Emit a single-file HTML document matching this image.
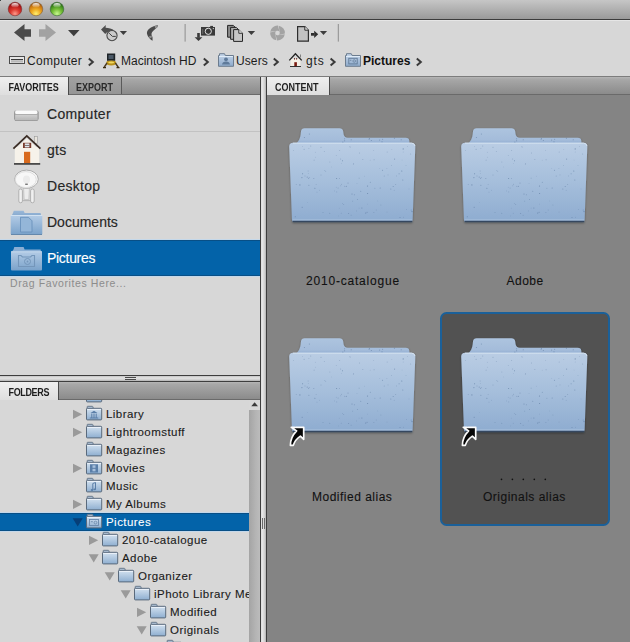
<!DOCTYPE html>
<html><head><meta charset="utf-8">
<style>
html,body{margin:0;padding:0;}
body{width:630px;height:642px;overflow:hidden;position:relative;background:#d7d7d7;font-family:"Liberation Sans",sans-serif;}
.a{position:absolute;}
.t{position:absolute;white-space:nowrap;line-height:1;}
#title{left:0;top:0;width:630px;height:19px;background:linear-gradient(#c6c6c6,#9a9a9a);}
#tline{left:0;top:19px;width:630px;height:1px;background:#3c3c3c;}
#thl{left:0;top:20px;width:630px;height:1px;background:#e6e6e6;}
.light{position:absolute;top:2px;width:14px;height:14px;border-radius:50%;}
.hline{position:absolute;height:1px;}
.vline{position:absolute;width:1px;}
.tabbar{position:absolute;height:17px;background:linear-gradient(#b6b6b6 0,#a8a8a8 2px,#8b8b8b 100%);}
.tab{position:absolute;height:18px;background:linear-gradient(#efefef,#dedede);}
.tabtxt{position:absolute;font-weight:bold;font-size:9px;letter-spacing:0px;transform:scaleY(1.13);transform-origin:0 0;color:#1e1e1e;line-height:1;white-space:nowrap;}
.fav{position:absolute;left:47px;font-size:14px;letter-spacing:0.3px;color:#262626;-webkit-text-stroke:0.15px currentColor;line-height:1;white-space:nowrap;}
.tree{position:absolute;font-size:11.5px;letter-spacing:0.45px;color:#161616;-webkit-text-stroke:0.1px currentColor;line-height:1;white-space:nowrap;}
.lbl{position:absolute;font-size:12px;color:#111;-webkit-text-stroke:0.1px currentColor;line-height:1;white-space:nowrap;}
</style></head><body>

<!-- title bar -->
<div class="a" style="left:0;top:0;width:1px;height:1px;background:#3a4442;z-index:5"></div>
<div id="title" class="a"></div>
<div id="tline" class="a"></div>
<div id="thl" class="a"></div>
<svg class="a" style="left:0;top:0" width="70" height="19" viewBox="0 0 70 19">
 <defs>
  <radialGradient id="lr" cx="0.5" cy="0.85" r="0.75"><stop offset="0" stop-color="#ff9a8a"/><stop offset="0.45" stop-color="#dc3a30"/><stop offset="0.85" stop-color="#b01818"/><stop offset="1" stop-color="#901010"/></radialGradient>
  <radialGradient id="ly" cx="0.5" cy="0.85" r="0.75"><stop offset="0" stop-color="#fff070"/><stop offset="0.45" stop-color="#eeaa22"/><stop offset="0.85" stop-color="#c87410"/><stop offset="1" stop-color="#a05a10"/></radialGradient>
  <radialGradient id="lg" cx="0.5" cy="0.85" r="0.75"><stop offset="0" stop-color="#c8f890"/><stop offset="0.45" stop-color="#78c03a"/><stop offset="0.85" stop-color="#3e8a1c"/><stop offset="1" stop-color="#2e6a18"/></radialGradient>
  <linearGradient id="lh" x1="0" y1="0" x2="0" y2="1"><stop offset="0" stop-color="#fff" stop-opacity="0.95"/><stop offset="1" stop-color="#fff" stop-opacity="0"/></linearGradient>
 </defs>
 <circle cx="15" cy="9" r="6.8" fill="url(#lr)" stroke="#7a3030" stroke-width="0.6"/>
 <ellipse cx="15" cy="5.3" rx="3.6" ry="2.4" fill="url(#lh)"/>
 <circle cx="36" cy="9" r="6.8" fill="url(#ly)" stroke="#80603a" stroke-width="0.6"/>
 <ellipse cx="36" cy="5.3" rx="3.6" ry="2.4" fill="url(#lh)"/>
 <circle cx="57" cy="9" r="6.8" fill="url(#lg)" stroke="#3a6a3a" stroke-width="0.6"/>
 <ellipse cx="57" cy="5.3" rx="3.6" ry="2.4" fill="url(#lh)"/>
</svg>

<!-- toolbar -->
<svg class="a" style="left:0;top:0" width="630" height="48" viewBox="0 0 630 48">
 <g fill="#4b4b4b">
  <path d="M14,32.5 L24.5,24 L24.5,29.3 L31,29.3 L31,36.7 L24.5,36.7 L24.5,41 Z"/>
 </g>
 <path fill="#a2a2a2" d="M56,32.5 L45.5,24 L45.5,29.3 L39,29.3 L39,36.7 L45.5,36.7 L45.5,41 Z"/>
 <path fill="#3e3e3e" d="M68,30 L79.5,30 L73.75,36.3 Z"/>
 <!-- recent -->
 <path fill="#4e4e4e" d="M101,29.6 L105.8,25 L105.6,27.8 C108.5,28 112,28.5 114.5,30.8 L111.5,31.5 C109,31 107,32 105.5,33.8 L105.2,34 Z"/>
 <circle cx="112" cy="35.6" r="5.1" fill="#cbcbcb" stroke="#4a4a4a" stroke-width="1.1"/>
 <path d="M109.2,33.2 L112.4,36.4 L115.8,36.4" fill="none" stroke="#404040" stroke-width="1"/>
 <path fill="#3e3e3e" d="M119.8,30.9 L127,30.9 L123.4,35.1 Z"/>
 <!-- boomerang -->
 <path fill="#4a4a4a" d="M158,25.3 C153,26 148,28.5 147,32 C146.5,35 149,38.5 152.6,40.8 L152.5,37 C151.5,35.5 151,33.5 152.2,32 C153.5,30.5 156,28.5 157.3,27.2 Z"/>
 <path fill="#a8a8a8" d="M154.5,26.2 L156.4,25.8 L157.6,27 L155.5,28.6 Z" opacity="0.8"/>
 <path fill="#a0a0a0" d="M148.8,36.4 L151.6,35.6 L152,37.2 L150,38.4 Z" opacity="0.8"/>
 <!-- separator -->
 <rect x="184.6" y="24" width="1" height="17.6" fill="#8e8e8e"/>
 <!-- camera -->
 <rect x="201" y="27" width="14" height="8.6" fill="#3a3a3a"/>
 <rect x="210.2" y="25.9" width="2.8" height="1.4" fill="#3a3a3a"/>
 <circle cx="208.3" cy="31.3" r="3.1" fill="#3a3a3a" stroke="#f4f4f4" stroke-width="0.9"/>
 <circle cx="213.3" cy="28.6" r="0.6" fill="#eee"/>
 <rect x="202.4" y="29" width="0.8" height="5" fill="#777"/>
 <rect x="197.2" y="33" width="2.6" height="4.6" fill="#3a3a3a"/>
 <path fill="#3a3a3a" d="M194.6,37.3 L202.4,37.3 L198.5,41 Z"/>
 <!-- docs -->
 <path d="M227.6,25.4 L233.3,25.4 L235.3,27.4 L235.3,37.2 L227.6,37.2 Z" fill="#8c8c8c" stroke="#262626" stroke-width="1"/>
 <path d="M230.6,27.4 L236.3,27.4 L238.6,29.7 L238.6,39.3 L230.6,39.3 Z" fill="#acacac" stroke="#262626" stroke-width="1"/>
 <path d="M233.6,29.6 L238.8,29.6 L242.5,33.3 L242.5,41.4 L233.6,41.4 Z" fill="#c6c6c6" stroke="#262626" stroke-width="1"/>
 <path d="M238.8,29.6 L238.8,33.3 L242.5,33.3" fill="#e0e0e0" stroke="#262626" stroke-width="0.9"/>
 <path fill="#3e3e3e" d="M247.7,31 L255.1,31 L251.4,35.1 Z"/>
 <!-- rotate -->
 <g fill="#a3a3a3">
  <path d="M270.19,31.84 A7.4,7.4 0 0 1 277.89,25.61 L279.75,32.52 A2.3,2.3 0 0 0 277.26,30.71 Z"/>
  <path d="M278.66,25.69 A7.4,7.4 0 0 1 284.89,33.39 L277.98,35.25 A2.3,2.3 0 0 0 279.79,32.76 Z"/>
  <path d="M284.81,34.16 A7.4,7.4 0 0 1 277.11,40.39 L275.25,33.48 A2.3,2.3 0 0 0 277.74,35.29 Z"/>
  <path d="M276.34,40.31 A7.4,7.4 0 0 1 270.11,32.61 L277.02,30.75 A2.3,2.3 0 0 0 275.21,33.24 Z"/>
 </g>
 <!-- doc arrow -->
 <path d="M297.6,26.6 L304.8,26.6 L308.4,30.2 L308.4,41.2 L297.6,41.2 Z" fill="#c2c2c2" stroke="#2e2e2e" stroke-width="1.2"/>
 <path d="M304.8,26.6 L304.8,30.2 L308.4,30.2" fill="#e4e4e4" stroke="#2e2e2e" stroke-width="1"/>
 <rect x="311" y="33" width="3.4" height="2.7" fill="#2e2e2e"/>
 <path fill="#2e2e2e" d="M314.2,30.7 L318.2,34.3 L314.2,38 Z"/>
 <path fill="#3e3e3e" d="M319.9,31 L327.1,31 L323.5,35 Z"/>
 <rect x="337.8" y="24" width="1" height="17.6" fill="#8e8e8e"/>
</svg>


<!-- breadcrumb -->
<svg class="a" style="left:0;top:48px" width="440" height="28" viewBox="0 48 440 28">
 <defs>
  <linearGradient id="bfold" x1="0" y1="0" x2="0" y2="1"><stop offset="0" stop-color="#c6d6ea"/><stop offset="1" stop-color="#8eaacb"/></linearGradient>
 </defs>
 <!-- computer icon -->
 <rect x="9.5" y="56.5" width="15" height="7" fill="#e6e6e6" stroke="#4a4a4a" stroke-width="1"/>
 <rect x="11" y="59" width="12" height="1.2" fill="#3a3a3a"/>
 <rect x="11" y="61" width="12" height="1.5" fill="#b8b8b8"/>
 <path d="M88.8,58.6 L92.8,62 L88.8,65.4" fill="none" stroke="#3a3a3a" stroke-width="2"/>
 <!-- HD lander -->
 <rect x="107" y="53.5" width="8.2" height="7.3" fill="#1e2428"/>
 <rect x="108.5" y="55" width="5" height="4" fill="#4a5866"/>
 <ellipse cx="111.2" cy="63" rx="5" ry="2.4" fill="#b8901a"/>
 <ellipse cx="111.2" cy="62.5" rx="3" ry="1.1" fill="#f0d860"/>
 <path d="M107,63 L104,67.5 M115.4,63 L118.4,67.5" stroke="#4a3a20" stroke-width="1.4"/>
 <path d="M103,67.6 L106,67.6 M116.5,67.6 L119.5,67.6" stroke="#3a2a10" stroke-width="1.2"/>
 <path d="M203.8,58.6 L207.8,62 L203.8,65.4" fill="none" stroke="#3a3a3a" stroke-width="2"/>
 <!-- users folder -->
 <path d="M219.5,55.5 L219.5,53.7 L224.5,53.7 L225.3,55.5 L233.5,55.5 L233.5,66.3 L218.5,66.3 L218.5,55.5 Z" fill="url(#bfold)" stroke="#6c7c8e" stroke-width="1"/>
 <rect x="219" y="56" width="14" height="1" fill="#e0ecf8"/>
 <circle cx="226" cy="59.3" r="1.9" fill="#5e7a9a"/>
 <path d="M222,64.6 Q222.5,61.5 226,61.5 Q229.5,61.5 230,64.6 Z" fill="#5e7a9a"/>
 <path d="M273.8,58.6 L277.8,62 L273.8,65.4" fill="none" stroke="#3a3a3a" stroke-width="2"/>
 <!-- house -->
 <rect x="290.6" y="59" width="9.8" height="7.4" fill="#f4f0e6"/>
 <path d="M289.3,60.4 L295.4,53.8 L301.7,60.4" fill="none" stroke="#222" stroke-width="1.3"/>
 <rect x="300" y="54.5" width="0.9" height="3" fill="#777"/>
 <rect x="294.3" y="62.2" width="2.6" height="4.2" fill="#7a1a10"/>
 <rect x="294" y="58" width="0.9" height="1.6" fill="#6a2a20"/>
 <rect x="296.2" y="58" width="0.9" height="1.6" fill="#6a2a20"/>
 <rect x="290" y="66" width="11" height="0.9" fill="#222"/>
 <path d="M330.6,58.6 L334.6,62 L330.6,65.4" fill="none" stroke="#3a3a3a" stroke-width="2"/>
 <!-- pictures folder -->
 <path d="M346.5,55.5 L346.5,53.7 L351.3,53.7 L352.1,55.5 L360.5,55.5 L360.5,66.3 L345.5,66.3 L345.5,55.5 Z" fill="url(#bfold)" stroke="#6c7c8e" stroke-width="1"/>
 <rect x="346" y="56" width="14" height="1" fill="#e0ecf8"/>
 <rect x="348.8" y="58.3" width="8.4" height="5.6" fill="none" stroke="#607a96" stroke-width="0.9"/>
 <rect x="349.8" y="59.8" width="1.6" height="0.8" fill="#607a96"/>
 <circle cx="354.2" cy="61" r="1.3" fill="none" stroke="#607a96" stroke-width="0.7"/>
 <path d="M416.8,58.6 L420.8,62 L416.8,65.4" fill="none" stroke="#3a3a3a" stroke-width="2"/>
</svg>
<div class="t" style="left:27px;top:55px;font-size:12px;letter-spacing:0.3px;color:#1c1c1c;">Computer</div>
<div class="t" style="left:121px;top:55px;font-size:12px;letter-spacing:0px;color:#1c1c1c;">Macintosh HD</div>
<div class="t" style="left:236px;top:55px;font-size:12px;letter-spacing:0.1px;color:#1c1c1c;">Users</div>
<div class="t" style="left:306px;top:55px;font-size:12px;letter-spacing:0.9px;color:#1c1c1c;">gts</div>
<div class="t" style="left:363px;top:55px;font-size:12px;font-weight:bold;letter-spacing:0px;color:#111;">Pictures</div>


<!-- panel frame -->
<div class="hline" style="left:0;top:76px;width:630px;background:#7c7c7c;"></div>
<!-- left favorites tab bar -->
<div class="tabbar" style="left:0;top:77px;width:260px;"></div>
<div class="hline" style="left:0;top:94px;width:260px;background:#6a6a6a;"></div>
<div class="tab" style="left:0;top:77px;width:68px;"></div>
<div class="vline" style="left:68px;top:77px;height:18px;background:#4a4a4a;"></div>
<div class="a" style="left:69px;top:77px;width:52px;height:17px;background:linear-gradient(#a2a2a2,#959595);"></div>
<div class="vline" style="left:121px;top:77px;height:17px;background:#5a5a5a;"></div>
<div class="tabtxt" style="left:8.5px;top:82.5px;">FAVORITES</div>
<div class="tabtxt" style="left:76px;top:82.5px;color:#2a2a2a;">EXPORT</div>
<!-- vertical splitter -->
<div class="vline" style="left:260px;top:77px;height:565px;background:#3e3e3e;"></div>
<div class="a" style="left:261px;top:77px;width:5px;height:565px;background:linear-gradient(90deg,#dedede,#e6e6e6 30%,#d2d2d2 70%,#b2b2b2);"></div>
<div class="vline" style="left:266px;top:77px;height:565px;background:#3e3e3e;"></div>
<!-- content tab bar -->
<div class="tabbar" style="left:267px;top:77px;width:363px;"></div>
<div class="hline" style="left:267px;top:94px;width:363px;background:#6a6a6a;"></div>
<div class="tab" style="left:267px;top:77px;width:62px;"></div>
<div class="vline" style="left:329px;top:77px;height:18px;background:#4a4a4a;"></div>
<div class="tabtxt" style="left:275px;top:82.5px;">CONTENT</div>
<div class="a" style="left:267px;top:95px;width:363px;height:547px;background:#848484;"></div>
<!-- favorites separator -->
<div class="hline" style="left:0;top:131px;width:260px;background:#c2c2c2;"></div>
<!-- horizontal splitter -->
<div class="hline" style="left:0;top:375px;width:260px;background:#3e3e3e;"></div>
<div class="a" style="left:0;top:376px;width:260px;height:5px;background:linear-gradient(#c4c4c4,#e4e4e4 40%,#d2d2d2 70%,#b0b0b0);"></div>
<div class="hline" style="left:0;top:381px;width:260px;background:#3e3e3e;"></div>
<div class="hline" style="left:125px;top:377px;width:11px;background:#4a4a4a;"></div>
<div class="hline" style="left:125px;top:379px;width:11px;background:#4a4a4a;"></div>
<!-- folders tab bar -->
<div class="tabbar" style="left:0;top:382px;width:260px;"></div>
<div class="hline" style="left:0;top:399px;width:260px;background:#6a6a6a;"></div>
<div class="tab" style="left:0;top:382px;width:58px;"></div>
<div class="vline" style="left:58px;top:382px;height:18px;background:#4a4a4a;"></div>
<div class="tabtxt" style="left:8.5px;top:387.5px;letter-spacing:-0.35px;">FOLDERS</div>


<!-- favorites list -->
<div class="a" style="left:0;top:239px;width:260px;height:1px;background:#c4d8ea;"></div>
<div class="a" style="left:0;top:240px;width:260px;height:36px;background:#0363a9;box-shadow:inset 0 1px 0 #084f86, inset 0 -1px 0 #084f86;"></div>
<div class="a" style="left:0;top:276px;width:260px;height:1px;background:#c4d8ea;"></div>
<svg class="a" style="left:0;top:96px" width="260" height="180" viewBox="0 96 260 180">
 <defs>
  <linearGradient id="minih" x1="0" y1="0" x2="1" y2="0"><stop offset="0" stop-color="#8a8a8a"/><stop offset="0.08" stop-color="#c8c8c8"/><stop offset="0.92" stop-color="#c8c8c8"/><stop offset="1" stop-color="#8a8a8a"/></linearGradient>
  <linearGradient id="miniv" x1="0" y1="0" x2="0" y2="1"><stop offset="0" stop-color="#d4d4d4"/><stop offset="1" stop-color="#b6b6b6"/></linearGradient>
  <linearGradient id="mini" x1="0" y1="0" x2="0" y2="1"><stop offset="0" stop-color="#ffffff"/><stop offset="0.22" stop-color="#f4f4f4"/><stop offset="0.36" stop-color="#cfcfcf"/><stop offset="0.7" stop-color="#b2b2b2"/><stop offset="0.88" stop-color="#8c8c8c"/><stop offset="1" stop-color="#9a9a9a"/></linearGradient>
  <linearGradient id="ffold" x1="0" y1="0" x2="0" y2="1"><stop offset="0" stop-color="#b4cce6"/><stop offset="1" stop-color="#7aa2ca"/></linearGradient>
  <linearGradient id="ffoldb" x1="0" y1="0" x2="0" y2="1"><stop offset="0" stop-color="#9ab8d8"/><stop offset="1" stop-color="#8aacd0"/></linearGradient>
  <radialGradient id="saucer" cx="0.5" cy="0.4" r="0.6"><stop offset="0" stop-color="#fafafa"/><stop offset="0.7" stop-color="#e0e0e0"/><stop offset="1" stop-color="#a8a8a8"/></radialGradient>
 </defs>
 <!-- mac mini -->
 <rect x="14" y="110.3" width="24.6" height="10.4" rx="2.3" fill="url(#minih)"/>
 <rect x="15.4" y="114.3" width="21.8" height="5.6" fill="url(#miniv)" opacity="0.9"/>
 <rect x="15.2" y="110.6" width="22.2" height="3.4" rx="1.6" fill="#fafafa"/>
 <rect x="15" y="114" width="22.6" height="0.7" fill="#a0a0a0"/>
 <rect x="15" y="120" width="22.6" height="0.7" fill="#8a8a8a"/>
 
 <!-- house -->
 <rect x="14.8" y="147" width="24.4" height="16.5" fill="#f6f2ea"/>
 <rect x="34.4" y="136.4" width="3" height="7" fill="#e8e4dc" stroke="#9a9a9a" stroke-width="0.6"/>
 <path d="M13.4,148.6 L26.8,135.9 L40.4,148.6" fill="none" stroke="#3a2c24" stroke-width="1.8"/>
 <path d="M16,148.5 L26.8,138.2 L37.8,148.5 Z" fill="#f6f2ea"/>
 <rect x="23" y="142.8" width="8.2" height="5.2" fill="#7a3a2a"/>
 <rect x="24.8" y="143.4" width="4.6" height="4" fill="#dfe6ee"/>
 <rect x="24.8" y="145.1" width="4.6" height="0.7" fill="#5a4a40"/>
 <rect x="24" y="151.8" width="6.2" height="11.4" fill="#d86a1e"/>
 <rect x="14" y="163" width="26.2" height="1.8" fill="#4a4a4a"/>
 <!-- enterprise -->
 <rect x="18.8" y="189" width="3.6" height="13.8" rx="1.8" fill="#f0f0f0" stroke="#a4a4a4" stroke-width="0.8"/>
 <rect x="30.6" y="189" width="3.6" height="13.8" rx="1.8" fill="#f0f0f0" stroke="#a4a4a4" stroke-width="0.8"/>
 <path d="M23.6,188 L29.4,188 L28.8,199.5 L24.2,199.5 Z" fill="#ececec" stroke="#b8b8b8" stroke-width="0.6"/>
 <path d="M22.2,200.6 L30.8,200.6" stroke="#b0b0b0" stroke-width="0.9"/>
 <ellipse cx="26.5" cy="179.2" rx="11.8" ry="9.1" fill="#f7f7f7" stroke="#a6a6a6" stroke-width="0.9"/>
 <ellipse cx="25.8" cy="179.6" rx="10.5" ry="8" fill="none" stroke="#dedede" stroke-width="1"/>
 <ellipse cx="26.5" cy="179.5" rx="3.5" ry="4" fill="#ebebeb"/>
 <rect x="25.2" y="183.6" width="2.6" height="1.3" fill="#6a6a6a"/>
 <!-- documents folder -->
 <path d="M13,213 L13.8,210.8 L23.6,210.8 L24.6,213 L40.6,213 L41,215 L12,215 Z" fill="url(#ffoldb)"/>
 <rect x="10.7" y="215" width="31.6" height="19.7" rx="1" fill="url(#ffold)"/>
 <rect x="10.7" y="215" width="31.6" height="1" fill="#d8e6f4" opacity="0.8"/>
 <rect x="11" y="234" width="31" height="1" fill="#6488ac"/>
 <path d="M20.5,217.3 L28.5,217.3 L32,220.8 L32,232 L20.5,232 Z" fill="#94b6d8" stroke="#6a92bc" stroke-width="0.9"/>
 <!-- pictures folder (selected) -->
 <path d="M13.5,249.5 L14.3,247 L23.6,247 L24.6,249.5 L40.6,249.5 L41,251.4 L12,251.4 Z" fill="#8aaed4"/>
 <rect x="11" y="251.3" width="31" height="19.3" rx="1" fill="url(#ffold)"/>
 <rect x="11" y="251.3" width="31" height="1" fill="#d0e0f0" opacity="0.8"/>
 <path d="M18.5,255.5 L21,255.5 L22.5,257 L30.5,257 L32,255.5 L34.5,255.5 L34.5,266.5 L18.5,266.5 Z" fill="none" stroke="#7496ba" stroke-width="1.1"/>
 <circle cx="27.5" cy="261.5" r="3" fill="none" stroke="#7496ba" stroke-width="1"/>
 <circle cx="27.5" cy="261.5" r="0.9" fill="#7496ba"/>
</svg>
<div class="fav" style="top:107px;">Computer</div>
<div class="fav" style="top:143px;">gts</div>
<div class="fav" style="top:179px;">Desktop</div>
<div class="fav" style="top:215px;letter-spacing:0px;">Documents</div>
<div class="fav" style="top:251px;color:#fff;letter-spacing:-0.3px;">Pictures</div>
<div class="t" style="left:10px;top:278px;font-size:10.5px;letter-spacing:0.6px;color:#8c8c8c;">Drag Favorites Here...</div>


<!-- folders tree -->
<div class="a" style="left:0;top:400px;width:249px;height:242px;overflow:hidden;">
 <div class="a" style="left:0;top:112px;width:249px;height:1px;background:#c4d8ea;"></div>
 <div class="a" style="left:0;top:113px;width:249px;height:18px;background:#0363a9;box-shadow:inset 0 1px 0 #084f86, inset 0 -1px 0 #084f86;"></div>
 <div class="a" style="left:0;top:131px;width:249px;height:1px;background:#c4d8ea;"></div>
 <svg class="a" style="left:0;top:-400px" width="249" height="642" viewBox="0 0 249 642">
  <defs>
   <linearGradient id="tfg" x1="0" y1="0" x2="0" y2="1"><stop offset="0" stop-color="#d4e2f0"/><stop offset="1" stop-color="#8eaed0"/></linearGradient>
   <g id="tf">
    <path d="M1.2,3.5 L1.2,1.8 Q1.2,1.3 1.7,1.3 L6.2,1.3 Q6.7,1.3 6.9,1.8 L7.3,3.5 Z" fill="#b8cce2" stroke="#5e6e80" stroke-width="0.9"/>
    <rect x="0.5" y="3.3" width="15.2" height="11.6" rx="0.8" fill="url(#tfg)" stroke="#5a6a7c" stroke-width="1"/>
    <rect x="1.2" y="4.1" width="13.8" height="0.9" fill="#eef4fa" opacity="0.9"/>
   </g>
  </defs>
  <use href="#tf" x="86" y="387"/>
  <path d="M73,409.7 L82.2,414.3 L73,419 Z" fill="#9a9a9a"/>
  <use href="#tf" x="86" y="405"/>
  <path d="M90.5,413 L94,410.8 L97.5,413 Z M91.3,413.5 h1 v4 h-1 Z M93.5,413.5 h1 v4 h-1 Z M95.7,413.5 h1 v4 h-1 Z M89.8,417.5 h8.4 v1 h-8.4 Z" fill="#5a7ea8"/>
  <path d="M73,427.7 L82.2,432.3 L73,437 Z" fill="#9a9a9a"/>
  <use href="#tf" x="86" y="423"/>
  <use href="#tf" x="86" y="441"/>
  <path d="M73,463.7 L82.2,468.3 L73,473 Z" fill="#9a9a9a"/>
  <use href="#tf" x="86" y="459"/>
  <rect x="90" y="464.3" width="8" height="8.2" fill="#5a7ea8"/><rect x="92.5" y="465.3" width="3" height="2.5" fill="#a8c0dc"/><rect x="92.5" y="468.8" width="3" height="2.5" fill="#a8c0dc"/>
  <use href="#tf" x="86" y="477"/>
  <path d="M95.5,482.5 L95.5,489.3 M92.8,490 L92.8,483.5 L95.5,482.5" stroke="#5a7ea8" stroke-width="1" fill="none"/><ellipse cx="92" cy="490" rx="1.3" ry="0.9" fill="#5a7ea8"/><ellipse cx="94.7" cy="489.3" rx="1.3" ry="0.9" fill="#5a7ea8"/>
  <path d="M73,499.7 L82.2,504.3 L73,509 Z" fill="#9a9a9a"/>
  <use href="#tf" x="86" y="495"/>
  <path d="M72.7,518.2 L82.7,518.2 L77.7,526.5 Z" fill="#063f78"/>
  <use href="#tf" x="86" y="513"/>
  <rect x="89.5" y="519.5" width="9" height="6" fill="none" stroke="#6a88aa" stroke-width="0.9"/><rect x="90.8" y="521.3" width="2" height="0.9" fill="#6a88aa"/><circle cx="95.5" cy="522.6" r="1.4" fill="none" stroke="#6a88aa" stroke-width="0.8"/>
  <path d="M89,535.7 L98.2,540.3 L89,545 Z" fill="#9a9a9a"/>
  <use href="#tf" x="102" y="531"/>
  <path d="M88.7,554.2 L98.7,554.2 L93.7,562.5 Z" fill="#9a9a9a"/>
  <use href="#tf" x="102" y="549"/>
  <path d="M104.7,572.2 L114.7,572.2 L109.7,580.5 Z" fill="#9a9a9a"/>
  <use href="#tf" x="118" y="567"/>
  <path d="M120.7,590.2 L130.7,590.2 L125.7,598.5 Z" fill="#9a9a9a"/>
  <use href="#tf" x="134" y="585"/>
  <path d="M137,607.7 L146.2,612.3 L137,617 Z" fill="#9a9a9a"/>
  <use href="#tf" x="150" y="603"/>
  <path d="M136.7,626.2 L146.7,626.2 L141.7,634.5 Z" fill="#9a9a9a"/>
  <use href="#tf" x="150" y="621"/>
  <use href="#tf" x="166" y="639"/>
 </svg>
 <div class="a" style="left:0;top:-400px;width:249px;height:642px;">
 <div class="tree" style="left:106px;top:409.2px;color:#1a1a1a;">Library</div>
 <div class="tree" style="left:106px;top:427.2px;color:#1a1a1a;">Lightroomstuff</div>
 <div class="tree" style="left:106px;top:445.2px;color:#1a1a1a;">Magazines</div>
 <div class="tree" style="left:106px;top:463.2px;color:#1a1a1a;">Movies</div>
 <div class="tree" style="left:106px;top:481.2px;color:#1a1a1a;">Music</div>
 <div class="tree" style="left:106px;top:499.2px;color:#1a1a1a;">My Albums</div>
 <div class="tree" style="left:106px;top:517.2px;color:#fff;">Pictures</div>
 <div class="tree" style="left:122px;top:535.2px;color:#1a1a1a;">2010-catalogue</div>
 <div class="tree" style="left:122px;top:553.2px;color:#1a1a1a;">Adobe</div>
 <div class="tree" style="left:138px;top:571.2px;color:#1a1a1a;">Organizer</div>
 <div class="tree" style="left:154px;top:589.2px;color:#1a1a1a;">iPhoto Library Media</div>
 <div class="tree" style="left:170px;top:607.2px;color:#1a1a1a;">Modified</div>
 <div class="tree" style="left:170px;top:625.2px;color:#1a1a1a;">Originals</div>
 </div>
</div>
<!-- scrollbar -->
<div class="a" style="left:249px;top:400px;width:11px;height:242px;background:#d8d8d8;"></div>
<svg class="a" style="left:249px;top:400px" width="11" height="12" viewBox="249 400 11 12"><path d="M251.3,406.3 L254.6,402.3 L258,406.3 Z" fill="#3a3a3a"/></svg>
<div class="a" style="left:249px;top:410px;width:11px;height:232px;background:linear-gradient(90deg,#a4a4a4,#b4b4b4 60%,#bcbcbc);"></div>
<div class="vline" style="left:262px;top:518px;height:11px;background:#6a6a6a;"></div>
<div class="vline" style="left:264px;top:518px;height:11px;background:#6a6a6a;"></div>


<!-- content items -->
<div class="a" style="left:439.5px;top:312px;width:166.5px;height:210px;border:2px solid #1b6099;border-radius:6.5px;background:#525252;"></div>
<svg class="a" style="left:267px;top:95px" width="363" height="547" viewBox="267 95 363 547">
 <defs>
  <linearGradient id="bgf" x1="0" y1="0" x2="0" y2="1"><stop offset="0" stop-color="#bacde4"/><stop offset="0.5" stop-color="#a5bedb"/><stop offset="1" stop-color="#8eacd0"/></linearGradient>
  <linearGradient id="bgt" x1="0" y1="0" x2="0" y2="1"><stop offset="0" stop-color="#adc4df"/><stop offset="0.75" stop-color="#a4bcda"/><stop offset="1" stop-color="#8eaad0"/></linearGradient>
  <filter id="fsh" x="-10%" y="-10%" width="120%" height="120%"><feGaussianBlur in="SourceAlpha" stdDeviation="1.2"/><feOffset dy="0.5"/><feComponentTransfer><feFuncA type="linear" slope="0.35"/></feComponentTransfer><feMerge><feMergeNode/><feMergeNode in="SourceGraphic"/></feMerge></filter>
  <g id="bigf" filter="url(#fsh)">
   <path d="M6.8,17 C9.5,14.5 11.4,11 11.7,7.2 L12,4.4 Q12.4,1.2 15.6,1.2 L50.4,1.2 Q53.7,1.2 54.2,4.5 L54.6,7.3 Q55.3,10.7 58.6,10.7 L116.5,10.7 Q120.2,10.7 120.3,14 L120.5,17 Z" fill="url(#bgt)"/>
   <path d="M4,15.8 L122.5,15.8 Q126,15.8 126.3,19.5 L123.6,93 Q123.5,95 121.5,95 L5,95 Q3,95 3,93 L0.2,19.5 Q0.4,15.8 4,15.8 Z" fill="url(#bgf)"/>
   <path d="M4,16.2 L122.5,16.2 Q125.6,16.2 126,19" fill="none" stroke="#d4e2f0" stroke-width="1"/>
   <path d="M3.6,93 L123.2,93" stroke="#c2d3e8" stroke-width="0.8" opacity="0.7"/><path d="M3.6,94.6 L123.2,94.6" stroke="#34465e" stroke-width="1.5"/>
   <circle cx="57.3" cy="59.4" r="0.55" fill="#46648c" opacity="0.41"/>
   <circle cx="105.6" cy="32.1" r="0.55" fill="#46648c" opacity="0.47"/>
   <circle cx="98.2" cy="25.0" r="0.5" fill="#46648c" opacity="0.30"/>
   <circle cx="67.6" cy="83.9" r="0.4" fill="#46648c" opacity="0.46"/>
   <circle cx="50.5" cy="51.5" r="0.45" fill="#46648c" opacity="0.47"/>
   <circle cx="102.8" cy="22.7" r="0.4" fill="#46648c" opacity="0.32"/>
   <circle cx="32.0" cy="20.2" r="0.55" fill="#46648c" opacity="0.36"/>
   <circle cx="73.9" cy="32.5" r="0.45" fill="#46648c" opacity="0.47"/>
   <circle cx="63.0" cy="67.0" r="0.55" fill="#46648c" opacity="0.48"/>
   <circle cx="51.8" cy="58.8" r="0.4" fill="#46648c" opacity="0.50"/>
   <circle cx="40.8" cy="35.0" r="0.5" fill="#46648c" opacity="0.26"/>
   <circle cx="70.6" cy="26.0" r="0.4" fill="#46648c" opacity="0.55"/>
   <circle cx="49.4" cy="88.9" r="0.4" fill="#46648c" opacity="0.32"/>
   <circle cx="114.2" cy="21.9" r="0.55" fill="#46648c" opacity="0.59"/>
   <circle cx="50.7" cy="23.4" r="0.45" fill="#46648c" opacity="0.52"/>
   <circle cx="35.4" cy="24.4" r="0.5" fill="#46648c" opacity="0.26"/>
   <circle cx="52.2" cy="86.3" r="0.45" fill="#46648c" opacity="0.34"/>
   <circle cx="15.1" cy="22.4" r="0.55" fill="#46648c" opacity="0.31"/>
   <circle cx="70.1" cy="51.1" r="0.45" fill="#46648c" opacity="0.59"/>
   <circle cx="95.3" cy="49.0" r="0.55" fill="#46648c" opacity="0.29"/>
   <circle cx="53.5" cy="33.8" r="0.5" fill="#46648c" opacity="0.55"/>
   <circle cx="120.0" cy="61.9" r="0.4" fill="#46648c" opacity="0.32"/>
   <circle cx="50.3" cy="81.2" r="0.4" fill="#46648c" opacity="0.26"/>
   <circle cx="20.6" cy="50.7" r="0.4" fill="#46648c" opacity="0.52"/>
   <circle cx="42.5" cy="39.9" r="0.4" fill="#46648c" opacity="0.28"/>
   <circle cx="28.0" cy="65.1" r="0.4" fill="#46648c" opacity="0.46"/>
   <circle cx="47.6" cy="51.5" r="0.55" fill="#46648c" opacity="0.54"/>
   <circle cx="19.3" cy="46.6" r="0.45" fill="#46648c" opacity="0.36"/>
   <circle cx="30.4" cy="63.2" r="0.45" fill="#46648c" opacity="0.31"/>
   <circle cx="78.5" cy="59.0" r="0.55" fill="#46648c" opacity="0.56"/>
   <circle cx="75.4" cy="49.2" r="0.4" fill="#46648c" opacity="0.29"/>
   <circle cx="64.5" cy="36.9" r="0.55" fill="#46648c" opacity="0.34"/>
   <circle cx="101.8" cy="62.1" r="0.5" fill="#46648c" opacity="0.43"/>
   <circle cx="114.5" cy="90.3" r="0.45" fill="#46648c" opacity="0.33"/>
   <circle cx="70.1" cy="81.1" r="0.4" fill="#46648c" opacity="0.35"/>
   <circle cx="113.1" cy="33.1" r="0.4" fill="#46648c" opacity="0.27"/>
   <circle cx="52.4" cy="36.4" r="0.4" fill="#46648c" opacity="0.31"/>
   <circle cx="47.3" cy="60.3" r="0.45" fill="#46648c" opacity="0.28"/>
   <circle cx="19.6" cy="51.3" r="0.5" fill="#46648c" opacity="0.48"/>
   <circle cx="85.9" cy="61.2" r="0.45" fill="#46648c" opacity="0.46"/>
   <circle cx="113.8" cy="53.1" r="0.5" fill="#46648c" opacity="0.50"/>
   <circle cx="118.5" cy="19.6" r="0.4" fill="#46648c" opacity="0.42"/>
   <circle cx="90.7" cy="41.6" r="0.4" fill="#46648c" opacity="0.28"/>
   <circle cx="68.5" cy="72.5" r="0.45" fill="#46648c" opacity="0.53"/>
   <circle cx="112.8" cy="44.0" r="0.55" fill="#46648c" opacity="0.57"/>
   <circle cx="107.5" cy="48.9" r="0.4" fill="#46648c" opacity="0.55"/>
   <circle cx="71.7" cy="64.2" r="0.55" fill="#46648c" opacity="0.38"/>
   <circle cx="4.5" cy="23.3" r="0.4" fill="#46648c" opacity="0.47"/>
   <circle cx="122.2" cy="83.1" r="0.5" fill="#46648c" opacity="0.39"/>
   <circle cx="91.2" cy="61.0" r="0.55" fill="#46648c" opacity="0.41"/>
   <circle cx="68.0" cy="56.4" r="0.4" fill="#46648c" opacity="0.36"/>
   <circle cx="13.5" cy="19.6" r="0.4" fill="#46648c" opacity="0.42"/>
   <circle cx="76.7" cy="86.1" r="0.5" fill="#46648c" opacity="0.56"/>
   <circle cx="47.2" cy="28.6" r="0.45" fill="#46648c" opacity="0.43"/>
   <circle cx="93.5" cy="43.3" r="0.55" fill="#46648c" opacity="0.42"/>
   <circle cx="32.0" cy="48.0" r="0.5" fill="#46648c" opacity="0.32"/>
   <circle cx="54.7" cy="77.6" r="0.45" fill="#46648c" opacity="0.56"/>
   <circle cx="49.1" cy="61.1" r="0.5" fill="#46648c" opacity="0.32"/>
   <circle cx="19.1" cy="44.0" r="0.4" fill="#46648c" opacity="0.50"/>
   <circle cx="117.0" cy="38.5" r="0.45" fill="#46648c" opacity="0.29"/>
   <circle cx="59.6" cy="86.5" r="0.55" fill="#46648c" opacity="0.38"/>
   <circle cx="65.4" cy="67.7" r="0.55" fill="#46648c" opacity="0.36"/>
   <circle cx="102.4" cy="38.6" r="0.4" fill="#46648c" opacity="0.49"/>
   <circle cx="36.7" cy="44.2" r="0.4" fill="#46648c" opacity="0.47"/>
   <circle cx="51.6" cy="32.1" r="0.5" fill="#46648c" opacity="0.33"/>
   <circle cx="19.9" cy="21.5" r="0.4" fill="#46648c" opacity="0.41"/>
   <circle cx="78.6" cy="66.5" r="0.5" fill="#46648c" opacity="0.59"/>
   <circle cx="85.1" cy="32.8" r="0.55" fill="#46648c" opacity="0.34"/>
   <circle cx="88.7" cy="73.9" r="0.4" fill="#46648c" opacity="0.31"/>
   <circle cx="35.7" cy="43.6" r="0.45" fill="#46648c" opacity="0.39"/>
   <circle cx="98.0" cy="85.1" r="0.4" fill="#46648c" opacity="0.39"/>
   <circle cx="110.1" cy="46.7" r="0.55" fill="#46648c" opacity="0.41"/>
   <circle cx="78.1" cy="85.3" r="0.55" fill="#46648c" opacity="0.44"/>
   <circle cx="81.3" cy="55.2" r="0.5" fill="#46648c" opacity="0.41"/>
   <circle cx="81.2" cy="33.2" r="0.4" fill="#46648c" opacity="0.32"/>
   <circle cx="111.0" cy="90.6" r="0.5" fill="#46648c" opacity="0.44"/>
   <circle cx="97.9" cy="41.7" r="0.4" fill="#46648c" opacity="0.37"/>
   <circle cx="12.9" cy="50.6" r="0.55" fill="#46648c" opacity="0.52"/>
   <circle cx="61.5" cy="20.1" r="0.4" fill="#46648c" opacity="0.40"/>
   <circle cx="7.2" cy="57.5" r="0.45" fill="#46648c" opacity="0.41"/>
   <circle cx="123.0" cy="84.6" r="0.55" fill="#46648c" opacity="0.58"/>
   <circle cx="62.1" cy="88.2" r="0.4" fill="#46648c" opacity="0.52"/>
   <circle cx="55.7" cy="59.3" r="0.45" fill="#46648c" opacity="0.43"/>
   <circle cx="104.2" cy="59.4" r="0.5" fill="#46648c" opacity="0.48"/>
   <circle cx="117.6" cy="82.4" r="0.45" fill="#46648c" opacity="0.36"/>
   <circle cx="19.9" cy="58.3" r="0.5" fill="#46648c" opacity="0.45"/>
   <circle cx="27.1" cy="57.7" r="0.4" fill="#46648c" opacity="0.46"/>
   <circle cx="6.3" cy="89.7" r="0.55" fill="#46648c" opacity="0.44"/>
   <circle cx="121.7" cy="27.0" r="0.4" fill="#46648c" opacity="0.49"/>
   <circle cx="10.9" cy="57.9" r="0.55" fill="#46648c" opacity="0.57"/>
   <circle cx="99.0" cy="47.9" r="0.45" fill="#46648c" opacity="0.42"/>
   <circle cx="18.2" cy="50.1" r="0.55" fill="#46648c" opacity="0.43"/>
   <circle cx="16.0" cy="49.0" r="0.4" fill="#46648c" opacity="0.57"/>
   <circle cx="18.5" cy="75.7" r="0.4" fill="#46648c" opacity="0.26"/>
   <circle cx="21.7" cy="18.9" r="0.5" fill="#46648c" opacity="0.36"/>
   <circle cx="45.6" cy="63.9" r="0.4" fill="#46648c" opacity="0.42"/>
   <circle cx="72.9" cy="81.0" r="0.5" fill="#46648c" opacity="0.50"/>
   <circle cx="87.2" cy="83.0" r="0.4" fill="#46648c" opacity="0.38"/>
   <circle cx="52.6" cy="57.2" r="0.45" fill="#46648c" opacity="0.44"/>
   <circle cx="106.7" cy="57.5" r="0.45" fill="#46648c" opacity="0.44"/>
   <circle cx="105.2" cy="63.3" r="0.45" fill="#46648c" opacity="0.33"/>
   <circle cx="91.9" cy="78.0" r="0.45" fill="#46648c" opacity="0.36"/>
   <circle cx="40.8" cy="86.3" r="0.45" fill="#46648c" opacity="0.52"/>
   <circle cx="26.3" cy="25.2" r="0.45" fill="#46648c" opacity="0.30"/>
   <circle cx="13.6" cy="46.7" r="0.55" fill="#46648c" opacity="0.54"/>
   <circle cx="53.6" cy="76.5" r="0.45" fill="#46648c" opacity="0.32"/>
   <circle cx="78.4" cy="77.1" r="0.4" fill="#46648c" opacity="0.32"/>
   <circle cx="84.9" cy="85.4" r="0.5" fill="#46648c" opacity="0.29"/>
   <circle cx="63.7" cy="74.1" r="0.45" fill="#46648c" opacity="0.53"/>
   <circle cx="60.8" cy="19.8" r="0.55" fill="#46648c" opacity="0.30"/>
   <circle cx="25.1" cy="33.1" r="0.45" fill="#46648c" opacity="0.60"/>
   <circle cx="114.2" cy="25.0" r="0.4" fill="#46648c" opacity="0.30"/>
   <circle cx="84.7" cy="23.7" r="0.4" fill="#46648c" opacity="0.36"/>
   <circle cx="59.0" cy="56.1" r="0.55" fill="#46648c" opacity="0.32"/>
   <circle cx="47.8" cy="64.9" r="0.4" fill="#46648c" opacity="0.55"/>
   <circle cx="24.8" cy="51.6" r="0.5" fill="#46648c" opacity="0.39"/>
   <circle cx="26.4" cy="30.2" r="0.4" fill="#46648c" opacity="0.36"/>
   <circle cx="13.2" cy="80.3" r="0.55" fill="#46648c" opacity="0.45"/>
   <circle cx="25.9" cy="61.3" r="0.5" fill="#46648c" opacity="0.53"/>
   <circle cx="34.0" cy="85.4" r="0.45" fill="#46648c" opacity="0.54"/>
   <circle cx="55.6" cy="13.8" r="0.5" fill="#46648c" opacity="0.5"/>
   <circle cx="105.4" cy="11.3" r="0.5" fill="#46648c" opacity="0.5"/>
   <circle cx="93.6" cy="12.2" r="0.5" fill="#46648c" opacity="0.5"/>
   <circle cx="55.6" cy="11.7" r="0.5" fill="#46648c" opacity="0.5"/>
   <circle cx="20.4" cy="7.1" r="0.5" fill="#46648c" opacity="0.5"/>
   <circle cx="62.2" cy="12.7" r="0.5" fill="#46648c" opacity="0.5"/>
   <circle cx="80.1" cy="12.3" r="0.5" fill="#46648c" opacity="0.5"/>
   <circle cx="112.2" cy="12.7" r="0.5" fill="#46648c" opacity="0.5"/>
   <circle cx="82.3" cy="13.4" r="0.5" fill="#46648c" opacity="0.5"/>
   <circle cx="53.9" cy="15.0" r="0.5" fill="#46648c" opacity="0.5"/>
   <circle cx="80.4" cy="11.4" r="0.5" fill="#46648c" opacity="0.5"/>
   <circle cx="93.0" cy="14.8" r="0.5" fill="#46648c" opacity="0.5"/>
   <circle cx="15.4" cy="10.4" r="0.5" fill="#46648c" opacity="0.5"/>
   <circle cx="90.6" cy="12.9" r="0.5" fill="#46648c" opacity="0.5"/>
  </g>
  <g id="alias">
   <path d="M3.3,2.8 L15.7,2.8 L15.7,14.8 L12.4,11.6 C9,13.8 6.5,17 5.3,20.8 L2.4,20.8 C2.4,15.5 4.6,10.5 8.6,6.4 Z" fill="#050505" stroke="#fafafa" stroke-width="1.7" stroke-linejoin="round"/>
  </g>
 </defs>
 <use href="#bigf" x="289" y="127"/>
 <use href="#bigf" x="461" y="127"/>
 <use href="#bigf" x="289" y="337"/>
 <use href="#bigf" x="461" y="337"/>
 <use href="#alias" x="288" y="424.5"/>
 <use href="#alias" x="460" y="424.5"/>
 <g fill="#111"><circle cx="501.5" cy="479.3" r="0.85"/><circle cx="512.4" cy="479.3" r="0.85"/><circle cx="523.3" cy="479.3" r="0.85"/><circle cx="534.3" cy="479.3" r="0.85"/><circle cx="545.3" cy="479.3" r="0.85"/></g>
</svg>
<div class="lbl" style="left:306px;top:274.5px;letter-spacing:0.8px;">2010-catalogue</div>
<div class="lbl" style="left:506.5px;top:274.5px;letter-spacing:0.5px;">Adobe</div>
<div class="lbl" style="left:312px;top:490.5px;letter-spacing:0.5px;">Modified alias</div>
<div class="lbl" style="left:483px;top:490.5px;letter-spacing:0.5px;">Originals alias</div>

</body></html>
